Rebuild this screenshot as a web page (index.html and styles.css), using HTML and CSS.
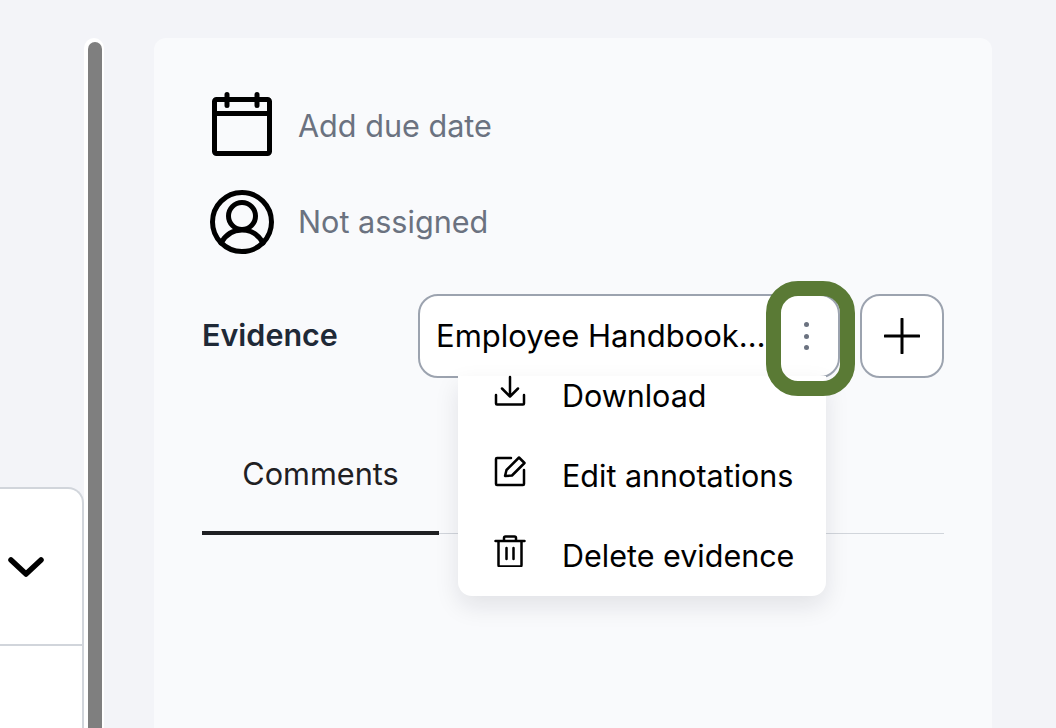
FILE: index.html
```html
<!DOCTYPE html>
<html lang="en">
<head>
<meta charset="utf-8">
<title>Evidence</title>
<link rel="stylesheet" href="styles.css">
</head>
<body>
<div class="page">
  <aside class="left">
    <div class="left-card">
      <div class="left-card-head">
        <svg class="chevron" viewBox="0 0 36 20" fill="none"><path d="M3 3l15 14L33 3" stroke="#000" stroke-width="5.500" stroke-linecap="round" stroke-linejoin="round"/></svg>
      </div>
    </div>
  </aside>
  <div class="scrollbar"><div class="thumb"></div></div>
  <main class="panel">
    <div class="meta-row meta-date">
      <svg class="ico-cal" viewBox="0 0 60 64" fill="none" stroke="#000" stroke-width="5" stroke-linecap="round" stroke-linejoin="round"><rect x="2.500" y="7.500" width="55" height="54" rx="2"/><path d="M2.500 21.500h55M15 2.500v11M45 2.500v11"/></svg>
      <span class="meta-text">Add due date</span>
    </div>
    <div class="meta-row meta-user">
      <svg class="ico-user" viewBox="0 0 66 66" fill="none" stroke="#000" stroke-width="5" stroke-linecap="round"><circle cx="33" cy="33" r="29.500"/><circle cx="33" cy="27" r="13.500"/><path d="M12 54c5-9 12-13 21-13s16 4 21 13"/></svg>
      <span class="meta-text">Not assigned</span>
    </div>
    <div class="evidence-row">
      <div class="evidence-label">Evidence</div>
      <div class="select">
        <span class="select-text">Employee Handbook…</span>
        <span class="kebab"><i></i><i></i><i></i></span>
        <span class="focus-ring"></span>
        <div class="menu">
          <div class="menu-list">
            <div class="menu-item">
              <svg class="menu-ico" viewBox="0 0 32 32" fill="none" stroke="#000" stroke-width="2.500" stroke-linecap="round" stroke-linejoin="round"><path d="M16 2v19M8 13.500l8 8 8-8M2 20v8.500a1 1 0 0 0 1 1h26a1 1 0 0 0 1-1V20"/></svg>
              <span>Download</span>
            </div>
            <div class="menu-item">
              <svg class="menu-ico" viewBox="0 0 32 32" fill="none" stroke="#000" stroke-width="2.500" stroke-linecap="round" stroke-linejoin="round"><path d="M17 3H3a1 1 0 0 0-1 1v25a1 1 0 0 0 1 1h26a1 1 0 0 0 1-1V15"/><path d="M11 21l1.500-6L25 2.500 30.500 8 18 20.500z"/></svg>
              <span>Edit annotations</span>
            </div>
            <div class="menu-item">
              <svg class="menu-ico" viewBox="0 0 32 32" fill="none" stroke="#000" stroke-width="2.500" stroke-linecap="round" stroke-linejoin="round"><path d="M1.500 6h29M10 6V3a1.500 1.500 0 0 1 1.500-1.500h9A1.500 1.500 0 0 1 22 3v3M4.500 6v24a1.500 1.500 0 0 0 1.500 1.500h20a1.500 1.500 0 0 0 1.500-1.500V6M12.500 13v11M19.500 13v11"/></svg>
              <span>Delete evidence</span>
            </div>
          </div>
        </div>
      </div>
      <button class="add-btn" type="button" aria-label="Add">
        <svg viewBox="0 0 36 36" fill="none" stroke="#000" stroke-width="3" stroke-linecap="round"><path d="M18 1v34M1 18h34"/></svg>
      </button>
    </div>
    <div class="tabs">
      <div class="tab">Comments</div>
    </div>
  </main>
</div>
</body>
</html>
```
FILE: styles.css
```css
* { box-sizing: border-box; }
html, body { margin: 0; height: 100%; }
body {
  background: #f3f4f8;
  font-family: Inter, "Liberation Sans", sans-serif;
  overflow: hidden;
}
.page {
  display: flex;
  height: 728px;
  width: 1056px;
}
.left {
  width: 84px;
  flex: none;
  padding-top: 487px;
}
.left-card {
  height: 241px;
  background: #fff;
  border: 2px solid #d1d5db;
  border-left: 0;
  border-bottom: 0;
  border-radius: 0 16px 0 0;
}
.left-card-head {
  height: 157px;
  border-bottom: 2px solid #d1d5db;
  display: flex;
  align-items: center;
  padding-left: 8px;
}
.chevron { width: 36px; height: 20px; display: block; }
.scrollbar {
  width: 20px;
  flex: none;
  margin-top: 38px;
  background: #fff;
  border-radius: 10px 10px 0 0;
  padding: 4px 2px 0 4px;
}
.thumb {
  height: 100%;
  background: #7f7f7f;
  border-radius: 7px 7px 0 0;
}
.panel {
  width: 838px;
  flex: none;
  margin: 38px 0 0 50px;
  background: #f9fafc;
  border-radius: 12px 12px 0 0;
  padding: 54px 48px 0;
  height: 690px;
}
.meta-row {
  display: flex;
  align-items: center;
  gap: 26px;
}
.meta-date { height: 64px; margin-left: 10px; }
.meta-user { height: 64px; margin: 34px 0 0 7px; gap: 23px; }
.ico-cal { width: 60px; height: 64px; display: block; flex: none; }
.ico-user { width: 66px; height: 66px; display: block; flex: none; }
.meta-text {
  font-size: 30.600px;
  line-height: 36px;
  color: #6b7280;
}
.meta-date .meta-text { margin-top: 4px; }
.evidence-row {
  display: flex;
  align-items: center;
  margin-top: 40px;
  height: 84px;
}
.evidence-label {
  width: 216px;
  flex: none;
  font-size: 30.500px;
  font-weight: 600;
  color: #1f2937;
  margin-top: -4px;
}
.select {
  position: relative;
  width: 422px;
  height: 84px;
  flex: none;
  background: #fff;
  border: 2px solid #9ca3af;
  border-radius: 20px;
  display: flex;
  align-items: center;
  padding-left: 16px;
}
.select-text {
  font-size: 31px;
  color: #000;
  white-space: nowrap;
  margin-top: -2px;
}
.kebab {
  position: absolute;
  left: 384px;
  top: 26px;
  display: flex;
  flex-direction: column;
  gap: 6.500px;
  z-index: 3;
}
.kebab i {
  width: 5px;
  height: 5px;
  border-radius: 50%;
  background: #6b7280;
  display: block;
}
.focus-ring {
  position: absolute;
  left: 346px;
  top: -15px;
  width: 89px;
  height: 115px;
  border: 15px solid #5a7a35;
  border-radius: 32px;
  z-index: 2;
}
.menu {
  position: absolute;
  left: 38px;
  top: 80px;
  width: 368px;
  height: 220px;
  background: #fff;
  border-radius: 0 0 14px 14px;
  box-shadow: 0 10px 24px rgba(17, 24, 39, .1);
  z-index: 1;
}
.menu-list { margin-top: -21px; }
.menu-item {
  display: flex;
  align-items: center;
  height: 80px;
  padding-left: 36px;
  gap: 36px;
  font-size: 30.500px;
  color: #000;
}
.menu-ico { width: 32px; height: 32px; flex: none; display: block; margin-top: -9px; }
.add-btn {
  width: 84px;
  height: 84px;
  margin-left: 20px;
  flex: none;
  background: #fff;
  border: 2px solid #9ca3af;
  border-radius: 20px;
  padding: 0;
  display: flex;
  align-items: center;
  justify-content: center;
}
.add-btn svg { width: 36px; height: 36px; display: block; }
.tabs {
  margin-top: 36px;
  border-bottom: 1px solid #d1d5db;
  height: 120px;
  display: flex;
}
.tab {
  width: 237px;
  height: 121px;
  border-bottom: 4px solid #1f2023;
  font-size: 30.700px;
  color: #1f2023;
  text-align: center;
  padding-top: 41px;
}
```
